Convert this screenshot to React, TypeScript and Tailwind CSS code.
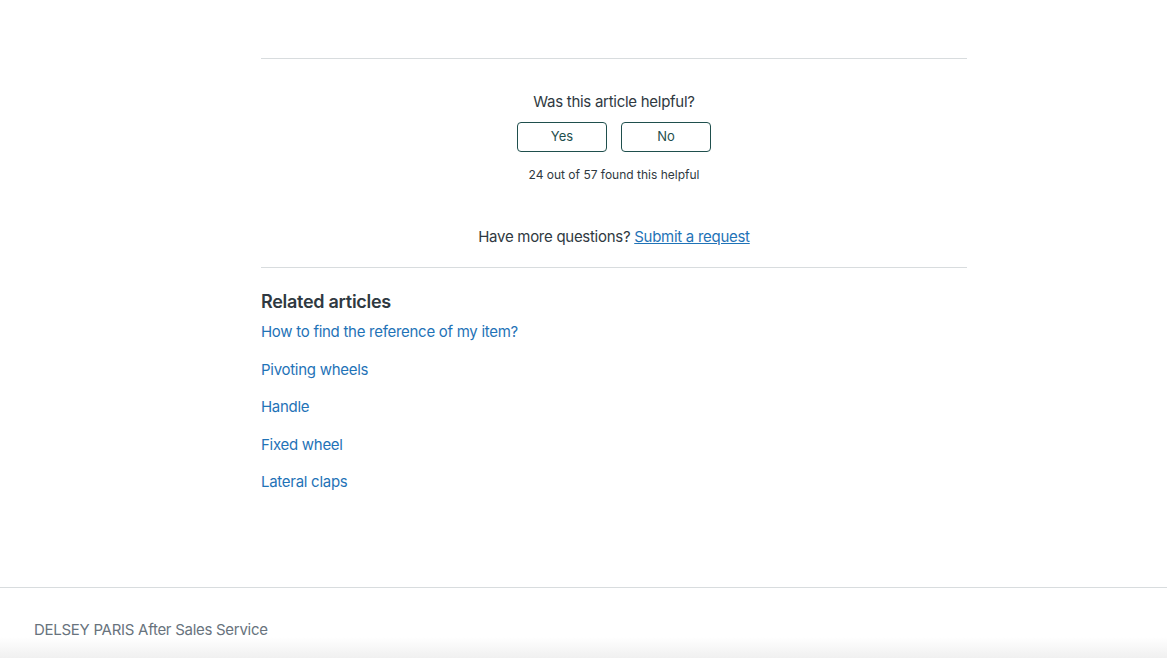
const font = { fontFamily: "Inter, 'Noto Sans', sans-serif" };

const related = [
  "How to find the reference of my item?",
  "Pivoting wheels",
  "Handle",
  "Fixed wheel",
  "Lateral claps",
];

export default function App() {
  return (
    <div style={font} className="flex min-h-[658px] flex-col bg-white text-[#2f3941] tracking-[-0.28px]">
      <main className="ml-[261px] w-[706px] pt-[58px]">
        <div className="border-t border-[#d8dcde] pt-[33px] text-center">
          <h4 className="text-[15px] leading-[20px]">Was this article helpful?</h4>
          <div className="mt-[10px] flex justify-center gap-[14px]">
            <button className="h-[30px] w-[90px] rounded-[4px] border border-[#1f4f4d] text-[13px] tracking-normal text-[#1f4f4d]">
              Yes
            </button>
            <button className="h-[30px] w-[90px] rounded-[4px] border border-[#1f4f4d] text-[13px] tracking-normal text-[#1f4f4d]">
              No
            </button>
          </div>
          <p className="mt-[15px] text-[12px] leading-[16px] tracking-normal text-[#2f3941]">
            24 out of 57 found this helpful
          </p>
          <p className="mt-[44px] pb-[20px] text-[15px] leading-[20px]">
            Have more questions?{" "}
            <a href="#" className="text-[#1f73b7] underline">
              Submit a request
            </a>
          </p>
        </div>
        <section className="border-t border-[#d8dcde] pt-[22px]">
          <h3 className="text-[18px] font-semibold leading-[24px]">Related articles</h3>
          <ul className="mt-[8px] flex flex-col">
            {related.map((r) => (
              <li key={r} className="h-[37.5px] text-[15px] leading-[20px]">
                <a href="#" className="text-[#1f73b7]">
                  {r}
                </a>
              </li>
            ))}
          </ul>
        </section>
      </main>
      <footer className="mt-[77px] border-t border-[#d8dcde] bg-gradient-to-b from-white from-[70%] to-[#f0f0f0] pt-[32px] pb-[18px]">
        <p className="px-[34px] text-[15px] leading-[20px] text-[#68737d]">
          DELSEY PARIS After Sales Service
        </p>
      </footer>
    </div>
  );
}
